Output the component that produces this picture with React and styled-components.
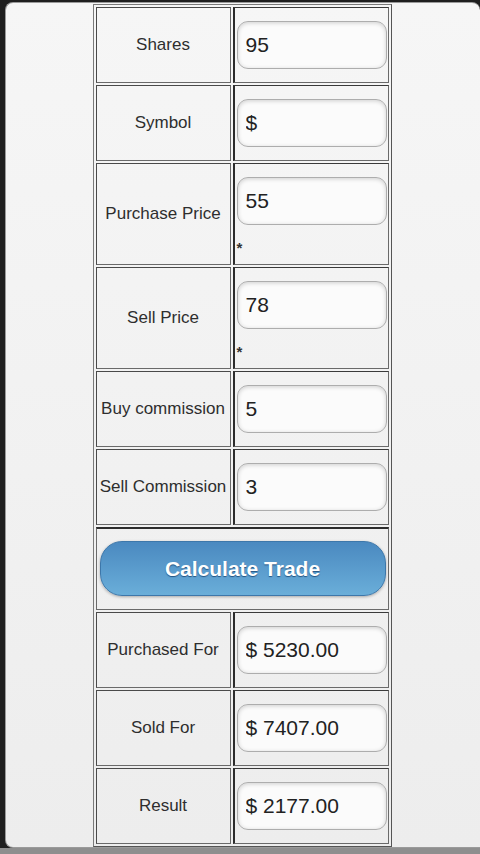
import React from 'react';
import styled, { createGlobalStyle } from 'styled-components';

const Global = createGlobalStyle`
  html, body {
    margin: 0;
    padding: 0;
    background: #1c1c1c;
  }
  * {
    box-sizing: border-box;
  }
`;

const Screen = styled.div`
  width: 480px;
  height: 854px;
  padding: 2px 0 0 5px;
  background: #1f1f1f;
  border-bottom: 6px solid #8e8e8e;
  overflow: hidden;
`;

const Panel = styled.div`
  height: 100%;
  padding-right: 2px;
  border: 1px solid #9a9a9a;
  border-right: none;
  border-radius: 8px 8px 0 8px;
  background: linear-gradient(#f6f6f6, #ededed);
  display: flex;
  justify-content: center;
  font-family: "Liberation Sans", Arial, sans-serif;
`;

const Grid = styled.div`
  margin-top: 1px;
  align-self: flex-start;
  width: 299px;
  display: grid;
  grid-template-columns: 135px 156px;
  gap: 2px;
  padding: 2px;
  border: 1px solid #7a7a7a;
  border-right-color: #555;
  border-bottom-color: #555;
`;

const Label = styled.div`
  height: ${(p) => p.$h}px;
  display: flex;
  align-items: center;
  justify-content: center;
  text-align: center;
  padding: 0 2px;
  font-size: 17px;
  color: #2e2e2e;
  white-space: nowrap;
  border: 1px solid #6a6a6a;
  border-top-color: #4a4a4a;
  border-left-color: #4a4a4a;
`;

const Field = styled.div`
  height: ${(p) => p.$h}px;
  padding: 13px 1px 0 2px;
  border: 1px solid #6a6a6a;
  border-left: 2px solid #2c2c2c;
  border-top-color: #3a3a3a;
`;

const Input = styled.input`
  display: block;
  width: 150px;
  height: 48px;
  padding: 0 8px;
  border: 1px solid #adadad;
  border-radius: 11px;
  background: #fbfbfb;
  box-shadow: inset 0 1px 4px rgba(0, 0, 0, 0.18);
  font-family: "Liberation Sans", Arial, sans-serif;
  font-size: 21px;
  color: #222;
  outline: none;
`;

const Star = styled.div`
  padding-top: 13px;
  font-size: 15px;
  font-weight: bold;
  line-height: 20px;
  color: #333;
`;

const ButtonCell = styled.div`
  grid-column: 1 / span 2;
  height: 83px;
  padding: 12px 2px 0 3px;
  border: 1px solid #6a6a6a;
  border-top: 2px solid #2c2c2c;
`;

const Button = styled.button`
  display: block;
  width: 100%;
  height: 55px;
  border: 1px solid #3d77aa;
  border-radius: 22px;
  background: linear-gradient(#4a89c0, #6aaed9);
  box-shadow: 0 1px 3px rgba(0, 0, 0, 0.3);
  font-family: "Liberation Sans", Arial, sans-serif;
  font-size: 21px;
  font-weight: bold;
  color: #fff;
  text-shadow: 0 1px 1px #245381;
  cursor: pointer;
`;

const inputs = [
  { label: 'Shares', value: '95' },
  { label: 'Symbol', value: '$' },
  { label: 'Purchase Price', value: '55', star: true },
  { label: 'Sell Price', value: '78', star: true },
  { label: 'Buy commission', value: '5' },
  { label: 'Sell Commission', value: '3' },
];

const results = [
  { label: 'Purchased For', value: '$ 5230.00' },
  { label: 'Sold For', value: '$ 7407.00' },
  { label: 'Result', value: '$ 2177.00' },
];

const Row = ({ label, value, star }) => {
  const h = star ? 102 : 76;
  return (
    <>
      <Label $h={h}>{label}</Label>
      <Field $h={h}>
        <Input defaultValue={value} />
        {star && <Star>*</Star>}
      </Field>
    </>
  );
};

export default function App() {
  return (
    <>
      <Global />
      <Screen>
        <Panel>
          <Grid>
            {inputs.map((r) => (
              <Row key={r.label} {...r} />
            ))}
            <ButtonCell>
              <Button>Calculate Trade</Button>
            </ButtonCell>
            {results.map((r) => (
              <Row key={r.label} {...r} />
            ))}
          </Grid>
        </Panel>
      </Screen>
    </>
  );
}
